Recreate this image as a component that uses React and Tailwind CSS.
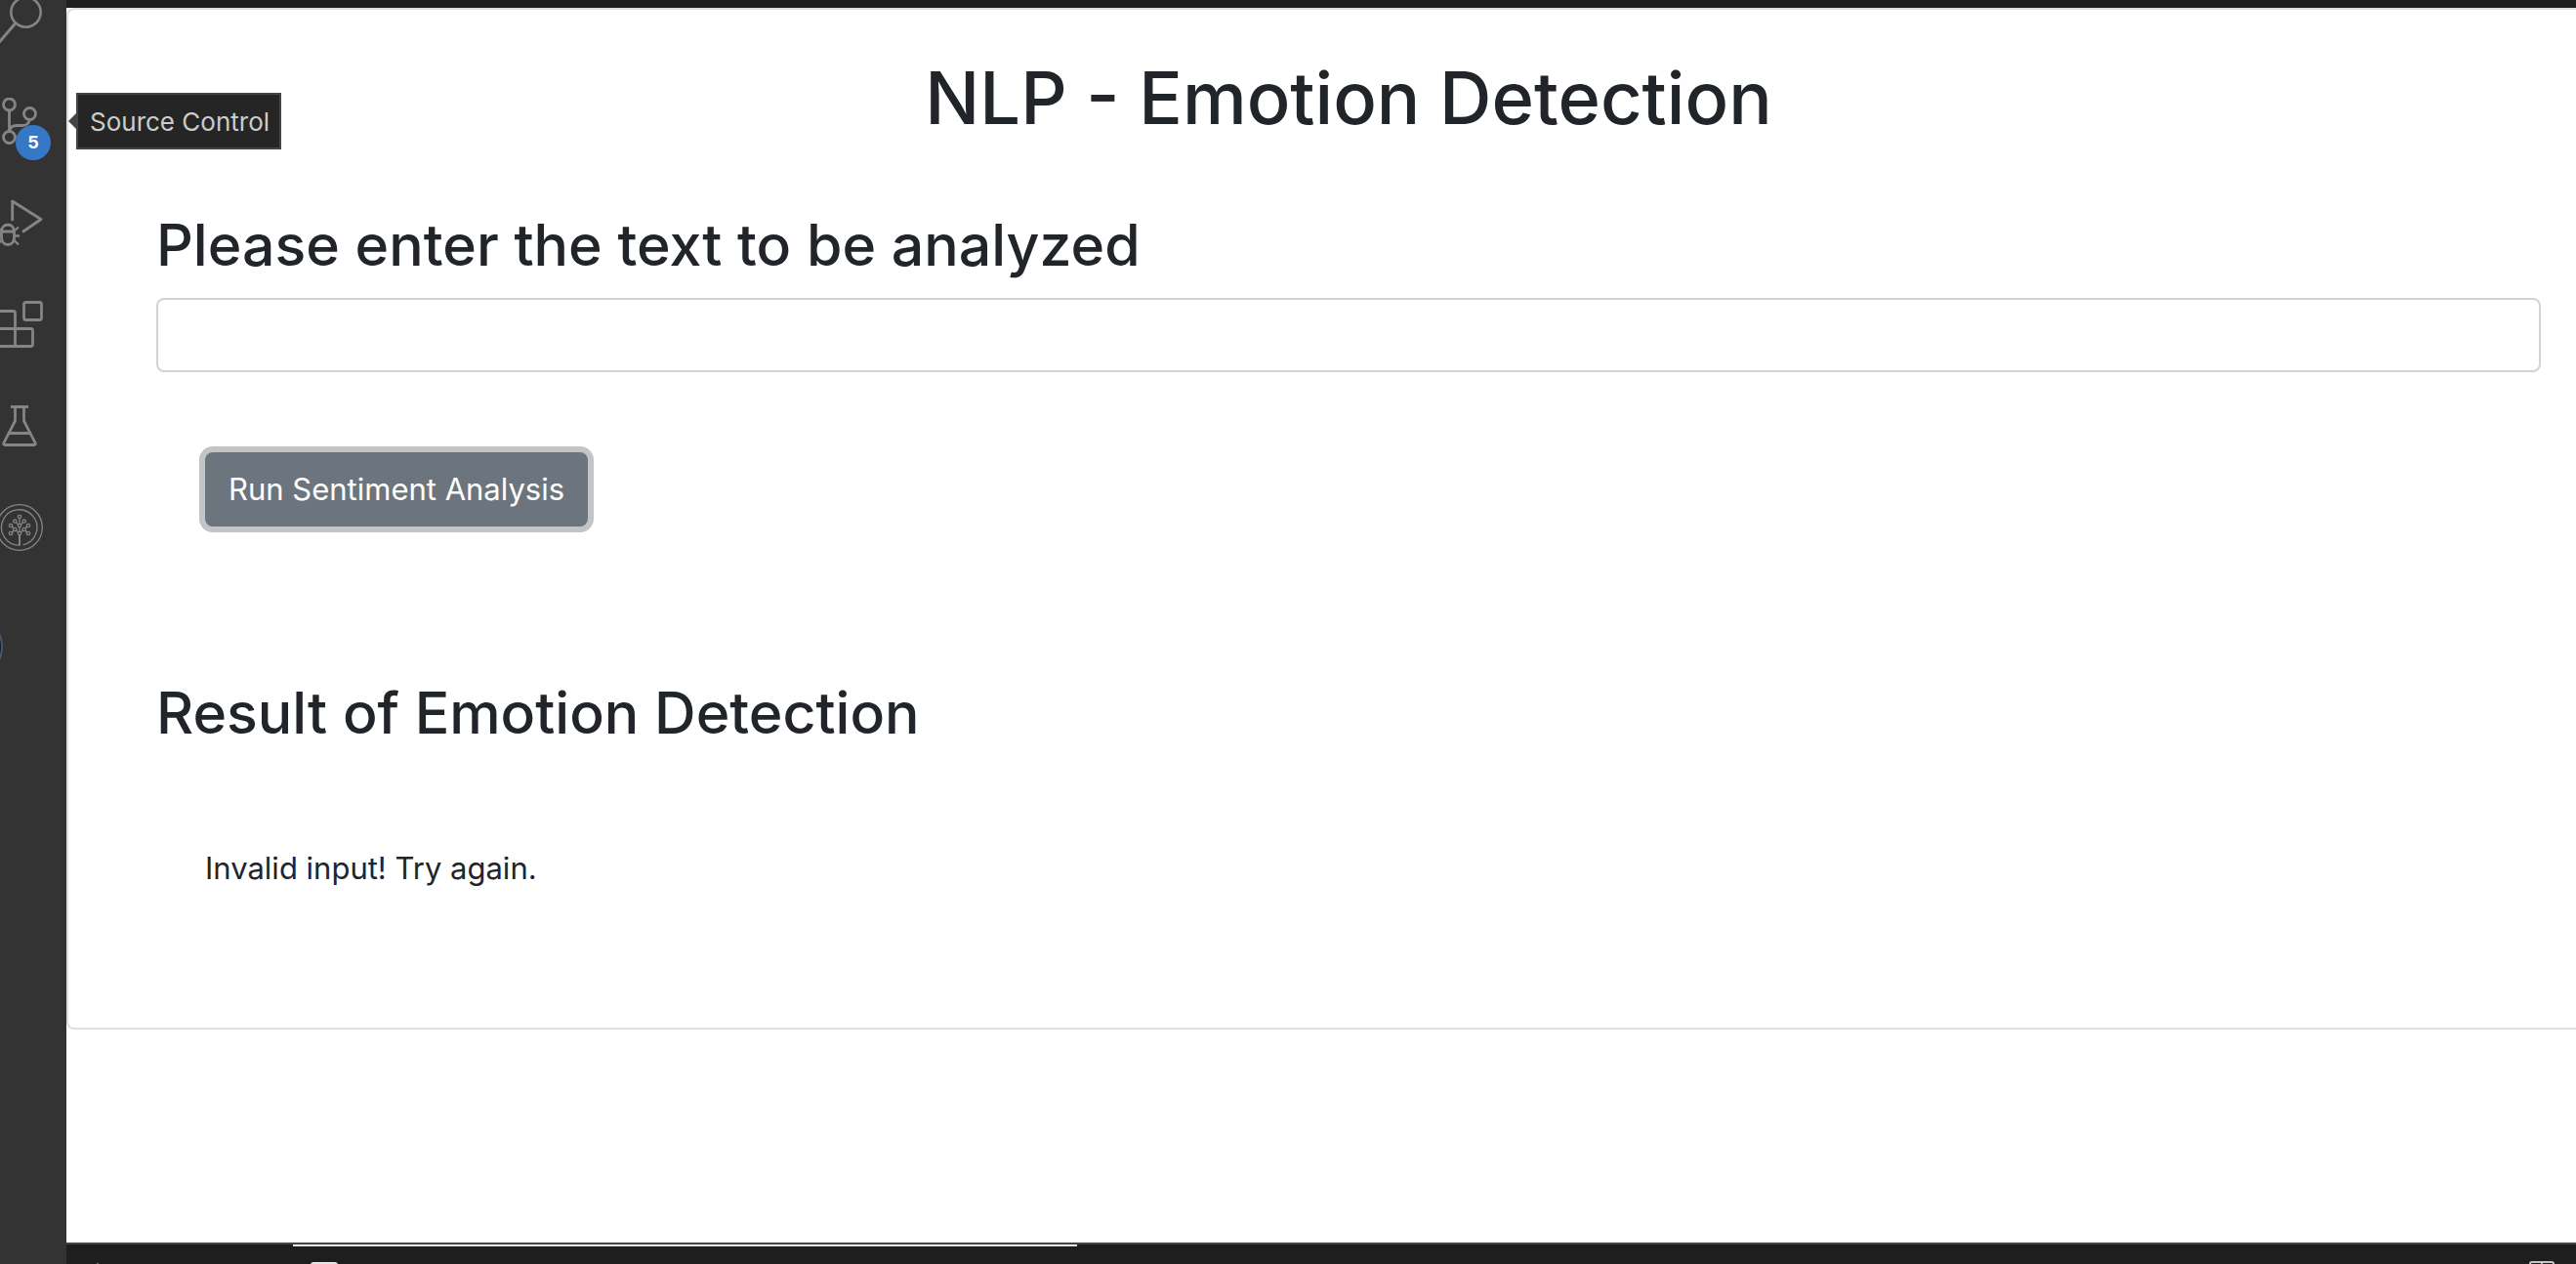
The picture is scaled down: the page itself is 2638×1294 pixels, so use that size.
const iconProps = {
  viewBox: "0 0 48 48",
  fill: "none",
  stroke: "currentColor",
  strokeWidth: 3,
  "aria-hidden": true,
  className: "block size-12",
};

function SearchIcon() {
  return (
    <svg {...iconProps}>
      <circle cx="30.5" cy="16.5" r="15.2" strokeWidth="2.5" />
      <path d="M19.8 27.8 2.5 48" />
    </svg>
  );
}

function SourceControlIcon() {
  return (
    <svg {...iconProps} strokeWidth="2.8">
      <circle cx="13.5" cy="7" r="6" />
      <circle cx="34.5" cy="16.5" r="6" />
      <circle cx="13.5" cy="40.5" r="6" />
      <path d="M13.5 13v21.5M34.5 22.5c-1 4-3.5 6-7.5 6h-6c-4 0-7 2-7.5 6" />
    </svg>
  );
}

function DebugIcon() {
  return (
    <svg {...iconProps} strokeWidth="2.8">
      <path d="M16.7 22V2L46 20.5 27 33.5" strokeLinejoin="round" />
      <path d="M5.5 33.5c0-4.5 2.5-7.5 6.5-7.5s6.5 3 6.5 7.5V39c0 4.5-2.5 7.5-6.5 7.5S5.5 43.5 5.5 39zM5 33h14" />
      <path d="M19 32l4-3.5M19 37.5h5M18.5 42l4.5 4.5M5 32l-4-3.5M5 37.5H0M5.5 42 1 46.5" strokeWidth="2.3" />
    </svg>
  );
}

function ExtensionsIcon() {
  return (
    <svg {...iconProps} strokeWidth="2.8">
      <rect x="28.5" y="1.5" width="18" height="18" rx="2" />
      <path d="M19.5 46.5v-34a2 2 0 0 0-2-2H3.5a2 2 0 0 0-2 2v32a2 2 0 0 0 2 2h32a2 2 0 0 0 2-2v-14a2 2 0 0 0-2-2h-34" />
    </svg>
  );
}

function TestingIcon() {
  return (
    <svg {...iconProps} strokeWidth="2.8">
      <path d="M15 4.5h18M19.5 5v14L7.8 41.5a1.4 1.4 0 0 0 1.2 2h30a1.4 1.4 0 0 0 1.2-2L28.5 19V5M13 31.5h22" />
    </svg>
  );
}

const treeNodes = [
  [24, 13], [19.3, 17.5], [28.7, 17.5], [15, 22], [33, 22], [24, 22],
  [19.3, 26], [28.7, 26], [15, 30], [33, 30], [24, 30],
];

function TreeIcon() {
  return (
    <svg {...iconProps} strokeWidth="1.3">
      <circle cx="24" cy="24" r="23.3" />
      <path d="M24 42.2A18.2 18.2 0 1 1 27.5 41.8" />
      <path d="M24 15v5M20.5 19l2 2M27.5 19l-2 2M16.5 23l1.5 2M31.5 23 30 25M20.5 27l2 2M27.5 27l-2 2M16.5 29l1.5-2M31.5 29 30 27M24 24v4" />
      <path d="M24 32v10.5" strokeWidth="2" />
      {treeNodes.map(([x, y]) => (
        <circle key={`${x}-${y}`} cx={x} cy={y} r="1.7" />
      ))}
    </svg>
  );
}

function AccountIcon() {
  return (
    <svg {...iconProps} strokeWidth="2">
      <circle cx="-27" cy="24" r="33" fill="#141a26" stroke="#4b586c" />
    </svg>
  );
}

function ActivityBar() {
  return (
    <nav
      aria-label="Activity Bar"
      className="relative z-10 w-17 shrink-0 bg-[#333333] text-[#858585]"
    >
      <div className="-mt-1 -ml-1 flex flex-col items-start gap-14">
        <button aria-label="Search"><SearchIcon /></button>
        <button aria-label="Source Control, 5 pending changes" className="relative">
          <SourceControlIcon />
          <span className="absolute top-7 left-5 flex size-9 items-center justify-center rounded-full bg-[#3578c6] text-lg font-bold text-white">
            5
          </span>
          <span
            role="tooltip"
            className="absolute -top-[5px] left-[82px] flex h-[58px] items-center border-2 border-[#454545] bg-[#252526] pr-2.5 pl-3 text-[26px] whitespace-nowrap text-[#cccccc]"
          >
            <svg viewBox="0 0 8 16" aria-hidden="true" className="absolute top-1/2 -left-2.5 h-4 w-2 -translate-y-1/2">
              <path d="M8 0v16L0 8z" fill="#454545" />
            </svg>
            Source Control
          </span>
        </button>
        <button aria-label="Run and Debug"><DebugIcon /></button>
        <button aria-label="Extensions"><ExtensionsIcon /></button>
        <button aria-label="Testing"><TestingIcon /></button>
        <button aria-label="Source Tree"><TreeIcon /></button>
        <button aria-label="Account" className="mt-[18px]"><AccountIcon /></button>
      </div>
    </nav>
  );
}

function BottomPanel() {
  return (
    <footer className="flex h-[22px] justify-between overflow-hidden border-t-2 border-[#454545] bg-[#1e1e1e]">
      <div className="flex">
        <div className="w-58 pt-[18px] pl-7">
          <svg viewBox="0 0 8 8" aria-hidden="true" className="size-2">
            <path d="M4 0l4 8H0z" fill="#858585" />
          </svg>
        </div>
        <div className="w-[803px] border-t-2 border-[#e7e7e7] pt-4 pl-[18px]">
          <svg viewBox="0 0 28 28" aria-hidden="true" className="size-7">
            <rect x="1" y="1" width="26" height="26" rx="2" fill="none" stroke="#e7e7e7" strokeWidth="2" />
          </svg>
        </div>
      </div>
      <div className="pt-[17px] pr-[22px]">
        <svg viewBox="0 0 26 26" aria-hidden="true" className="size-[26px]">
          <path d="M3 1h20a2 2 0 0 1 2 2v22H1V3a2 2 0 0 1 2-2zM13 1v24" fill="none" stroke="#c5c5c5" strokeWidth="2" />
        </svg>
      </div>
    </footer>
  );
}

export default function App() {
  return (
    <div className="flex min-h-screen overflow-hidden bg-white font-['Inter',sans-serif] text-[#212529]">
      <ActivityBar />
      <div className="flex min-w-0 grow flex-col">
        <div className="h-2 bg-[#1e1e1e]" />
        <main className="grow">
          <section className="rounded-l-lg border-2 border-r-0 border-[#dfdfdf] pt-[42px] pr-9 pb-[138px] pl-[90px]">
            <h1 className="text-center text-[74px] leading-24 font-medium">NLP - Emotion Detection</h1>
            <label htmlFor="text-to-analyze" className="mt-16 block text-[59px] leading-[77px] font-medium">
              Please enter the text to be analyzed
            </label>
            <input
              id="text-to-analyze"
              type="text"
              className="mt-4 block h-[76px] w-full rounded-lg border-2 border-[#ced4da] px-6 text-[31px] outline-none"
            />
            <div className="px-[50px] pt-[82px]">
              <button className="h-[76px] rounded-lg bg-[#6c757d] px-6 text-[31px] text-white ring-6 ring-[#c1c5c8]">
                Run Sentiment Analysis
              </button>
            </div>
            <h2 className="mt-38 text-[59px] leading-[77px] font-medium">Result of Emotion Detection</h2>
            <p className="mt-24 px-[50px] text-[31px] leading-[50px]">Invalid input! Try again.</p>
          </section>
        </main>
        <BottomPanel />
      </div>
    </div>
  );
}
